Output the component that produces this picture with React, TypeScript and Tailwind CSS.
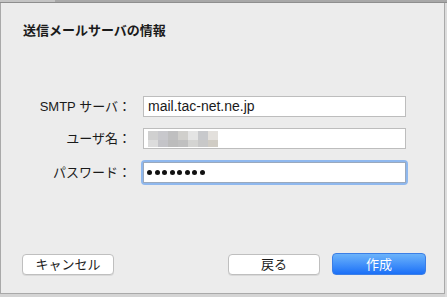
const font = { fontFamily: '"Liberation Sans", "Noto Sans CJK JP", sans-serif' };

const blur = [
  ["#d0d0d0", "#c8c8cc", "#bfbfc0", "#d0cfcc", "#e4e4e4", "#c8c9cc", "#e3e0dc"],
  ["#dcdcdc", "#c4c4c8", "#bcbcbc", "#c0c0c0", "#d4d4d2", "#c8c8c8", "#d0ccc4"],
];

export default function App() {
  return (
    <div className="w-[447px] h-[297px] bg-[#d4d4d4] flex flex-col overflow-hidden text-[#1a1a1a]" style={font}>
      <div className="h-[3px] flex shrink-0 border-b border-[#8e8e8e]">
        <div className="w-[55px] bg-[#c4c4c4]" />
        <div className="flex-1 bg-[#a8a8a8]" />
      </div>
      <div className="flex flex-1">
        <div className="w-[445px] h-[291px] bg-[#ececec] border-l border-r border-b border-[#a9a9a9] flex flex-col">
          <div className="pl-[22px] pt-[19px] text-[13px] font-bold leading-[18px]">送信メールサーバの情報</div>

          <div className="mt-[56px] flex flex-col gap-[11px]">
            <div className="flex items-center">
              <div className="w-[131px] text-right text-[13px] pr-[1px]">SMTP サーバ：</div>
              <div className="ml-[11px] w-[263px] h-[21px] bg-white border border-[#bdbdbd] flex items-center px-[4px] text-[14px]">
                mail.tac-net.ne.jp
              </div>
            </div>
            <div className="flex items-center">
              <div className="w-[131px] text-right text-[13px] pr-[1px]">ユーザ名：</div>
              <div className="ml-[11px] w-[263px] h-[21px] bg-white border border-[#bdbdbd] flex items-center px-[4px]">
                <div className="flex flex-col">
                  {blur.map((row, i) => (
                    <div key={i} className={i === 0 ? "flex h-[9px]" : "flex h-[7px]"}>
                      {row.map((c, j) => (
                        <div key={j} className="w-[10px]" style={{ backgroundColor: c }} />
                      ))}
                    </div>
                  ))}
                </div>
              </div>
            </div>
            <div className="flex items-center">
              <div className="w-[131px] text-right text-[13px] pr-[1px]">パスワード：</div>
              <div className="ml-[9px] w-[267px] h-[25px] rounded-[4px] bg-[#8fb8ee] p-[2px]">
                <div className="w-full h-full bg-white border border-[#9aa9bd] flex items-center gap-[2.5px] px-[3px]">
                  {Array.from({ length: 8 }).map((_, i) => (
                    <span key={i} className="w-[5px] h-[5px] rounded-full bg-[#111]" />
                  ))}
                </div>
              </div>
            </div>
          </div>

          <div className="mt-auto mb-[18px] flex items-center pl-[21px] pr-[18px]">
            <button className="w-[92px] h-[21px] rounded-[4px] bg-white border border-[#bfbfbf] shadow-[0_1px_0_rgba(0,0,0,0.08)] text-[13px] leading-none">
              キャンセル
            </button>
            <div className="flex-1" />
            <button className="w-[92px] h-[21px] rounded-[4px] bg-white border border-[#bfbfbf] shadow-[0_1px_0_rgba(0,0,0,0.08)] text-[13px] leading-none">
              戻る
            </button>
            <button className="ml-[12px] w-[94px] h-[22px] rounded-[4px] bg-gradient-to-b from-[#6cb3fa] to-[#1a6ff7] border border-[#3c7fe6] text-white text-[13px] leading-none">
              作成
            </button>
          </div>
        </div>
        <div className="flex-1 bg-[#dcdcdc]" />
      </div>
    </div>
  );
}
